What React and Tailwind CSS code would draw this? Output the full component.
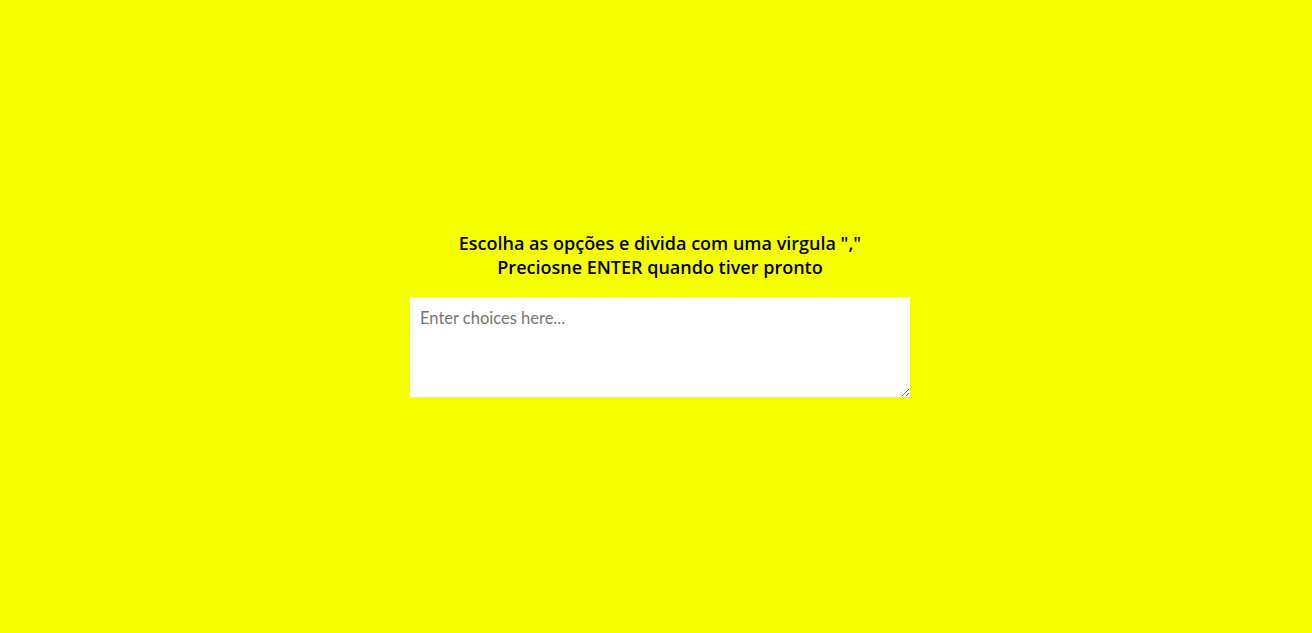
import React, { useState } from "react";

export default function App() {
  const [choices, setChoices] = useState("");

  return (
    <div
      className="flex h-screen flex-col items-center justify-center bg-[#f5ff00] pb-[6px] pl-[8px]"
      style={{ fontFamily: "Lato, 'Noto Sans', sans-serif" }}
    >
      <h3 className="mb-[18px] text-center font-['Open_Sans',sans-serif] text-[18px] font-semibold leading-6 text-black">
        Escolha as opções e divida com uma virgula ","
        <br />
        Preciosne ENTER quando tiver pronto
      </h3>
      <textarea
        className="h-[100px] w-[500px] bg-white px-[10px] py-[9px] text-[16.5px] text-black outline-none placeholder:text-[#757575]"
        placeholder="Enter choices here..."
        value={choices}
        onChange={(e) => setChoices(e.target.value)}
      />
    </div>
  );
}
